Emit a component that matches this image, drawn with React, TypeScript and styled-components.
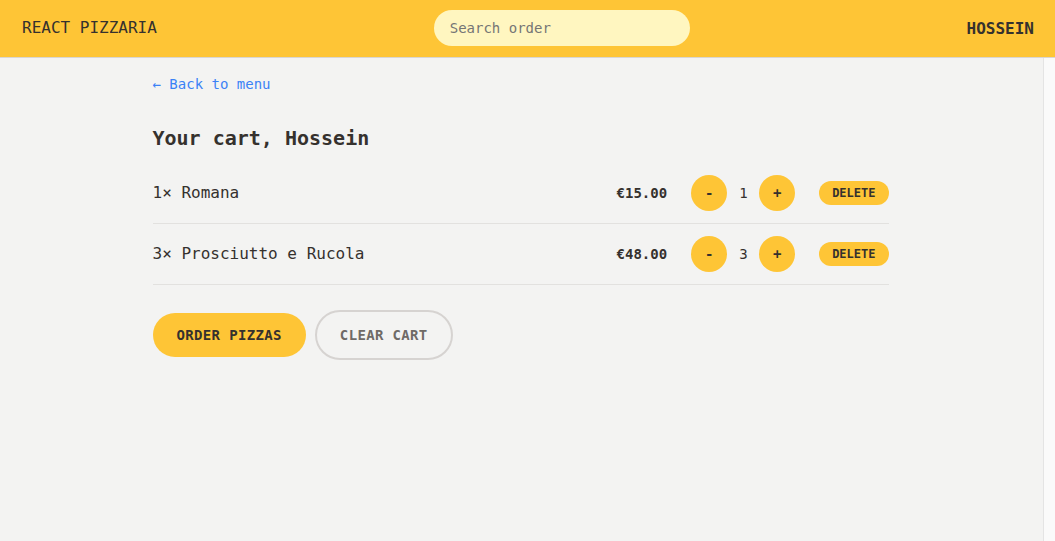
import React from "react"
import styled, { createGlobalStyle } from "styled-components"

const GlobalStyle = createGlobalStyle`
	* {
		box-sizing: border-box;
	}
	html,
	body {
		margin: 0;
		height: 100%;
	}
	body {
		font-family: "DejaVu Sans Mono", "Liberation Mono", monospace;
		color: #35312e;
		background: #f3f3f2;
	}
	#root {
		height: 100%;
	}
`

const yellow = "#fec536"

const Layout = styled.div`
	display: grid;
	grid-template-rows: auto 1fr;
	height: 100vh;
`

const Header = styled.header`
	display: flex;
	align-items: center;
	justify-content: space-between;
	padding: 10px 21px 11px 22px;
	background: ${yellow};
	border-bottom: 1px solid #d9d6d2;
`

const Logo = styled.a`
	font-size: 16px;
	line-height: 24px;
	color: #35312e;
	text-decoration: none;
`

const Search = styled.input`
	width: 256px;
	height: 36px;
	padding: 0 16px;
	border: none;
	border-radius: 999px;
	background: #fff6c0;
	font-family: inherit;
	font-size: 14px;
	color: #35312e;
	outline: none;
	::placeholder {
		color: #9c958f;
	}
`

const UserName = styled.div`
	font-size: 16px;
	font-weight: 700;
	text-transform: uppercase;
	color: #35312e;
`

const Body = styled.div`
	display: grid;
	grid-template-columns: 1fr 12px;
	min-height: 0;
`

const Main = styled.main`
	overflow: hidden;
`

/* the page's scroll track on the right */
const ScrollTrack = styled.div`
	background: #fafafa;
	border-left: 1px solid #e4e4e4;
`

const Container = styled.div`
	max-width: 768px;
	margin: 0 auto;
	padding: 16px 17px 16px 15px;
`

const BackLink = styled.a`
	display: inline-block;
	font-size: 14px;
	line-height: 20px;
	color: #3b82f6;
	text-decoration: none;
`

const Title = styled.h2`
	margin: 30px 0 0;
	font-size: 20px;
	line-height: 28px;
	font-weight: 700;
`

const List = styled.ul`
	margin: 11px 0 0;
	padding: 0;
	list-style: none;
	border-bottom: 1px solid #e2e1df;
`

const Row = styled.li`
	display: flex;
	align-items: center;
	justify-content: space-between;
	padding: 12px 0;
	& + & {
		border-top: 1px solid #e2e1df;
	}
`

const Name = styled.p`
	margin: 0;
	font-size: 16px;
	line-height: 24px;
`

const Controls = styled.div`
	display: flex;
	align-items: center;
	gap: 24px;
`

const Price = styled.p`
	margin: 0;
	font-size: 14px;
	font-weight: 700;
`

const Quantity = styled.div`
	display: flex;
	align-items: center;
	gap: 12px;
`

const Count = styled.span`
	font-size: 14px;
	width: 8px;
	text-align: center;
`

const RoundButton = styled.button`
	width: 36px;
	height: 36px;
	border: none;
	border-radius: 50%;
	background: ${yellow};
	font-family: inherit;
	font-size: 14px;
	font-weight: 700;
	color: #35312e;
	cursor: pointer;
`

const SmallButton = styled.button`
	height: 24px;
	padding: 0 13px;
	border: none;
	border-radius: 999px;
	background: ${yellow};
	font-family: inherit;
	font-size: 12px;
	font-weight: 700;
	text-transform: uppercase;
	color: #35312e;
	cursor: pointer;
`

const Actions = styled.div`
	display: flex;
	align-items: center;
	gap: 9px;
	margin-top: 25px;
`

const PillButton = styled.button<{ $variant?: "primary" | "secondary" }>`
	height: ${({ $variant }) => ($variant == "secondary" ? "50px" : "44px")};
	padding: 0 ${({ $variant }) => ($variant == "secondary" ? "23px" : "24px")};
	border-radius: 999px;
	border: ${({ $variant }) => ($variant == "secondary" ? "2px solid #d6d3d1" : "none")};
	background: ${({ $variant }) => ($variant == "secondary" ? "transparent" : yellow)};
	font-family: inherit;
	font-size: 14px;
	font-weight: 700;
	letter-spacing: 0.35px;
	text-transform: uppercase;
	color: ${({ $variant }) => ($variant == "secondary" ? "#6f6a66" : "#35312e")};
	cursor: pointer;
`

const cart = [
	{ id: 1, quantity: 1, name: "Romana", total: 15 },
	{ id: 2, quantity: 3, name: "Prosciutto e Rucola", total: 48 },
]

const App: React.FC = () => {
	return (
		<>
			<GlobalStyle />
			<Layout>
				<Header>
					<Logo href="#">REACT PIZZARIA</Logo>
					<Search placeholder="Search order" />
					<UserName>Hossein</UserName>
				</Header>
				<Body>
					<Main>
						<Container>
							<BackLink href="#">&larr; Back to menu</BackLink>
							<Title>Your cart, Hossein</Title>
							<List>
								{cart.map((item) => (
									<Row key={item.id}>
										<Name>
											{item.quantity}&times; {item.name}
										</Name>
										<Controls>
											<Price>€{item.total.toFixed(2)}</Price>
											<Quantity>
												<RoundButton>-</RoundButton>
												<Count>{item.quantity}</Count>
												<RoundButton>+</RoundButton>
											</Quantity>
											<SmallButton>Delete</SmallButton>
										</Controls>
									</Row>
								))}
							</List>
							<Actions>
								<PillButton>Order pizzas</PillButton>
								<PillButton $variant="secondary">Clear cart</PillButton>
							</Actions>
						</Container>
					</Main>
					<ScrollTrack />
				</Body>
			</Layout>
		</>
	)
}

export default App
